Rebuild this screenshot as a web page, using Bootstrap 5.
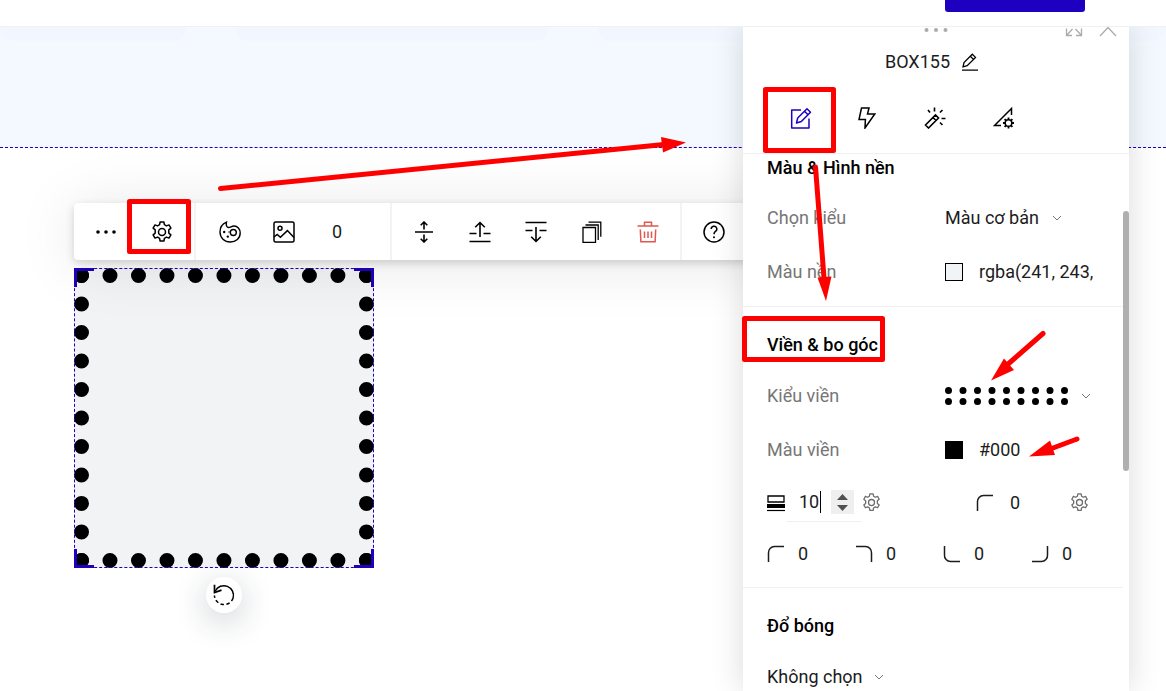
<!DOCTYPE html>
<html lang="vi">
<head>
<meta charset="utf-8">
<meta name="viewport" content="width=device-width, initial-scale=1">
<title>BOX155</title>
<link href="https://cdn.jsdelivr.net/npm/bootstrap@5.3.0/dist/css/bootstrap.min.css" rel="stylesheet">
<style>
:root{--brand:#1e00c0;--line:#f0f0f1}
body{font-family:Roboto,"Noto Sans",sans-serif;font-size:18px;line-height:28px;color:#1c1c1c;background:#fff;fill:none;stroke:currentColor;stroke-width:1.5}
svg{display:block}
button,input,select{font:inherit;color:inherit}
.topbar{height:27px;padding-right:81px;border-bottom:1px solid var(--line)}
.btn-publish{width:140px;height:12px;background:var(--brand);border-radius:0 0 3px 3px}
.hero{height:121px;background:#f4f8ff;border-bottom:1px dashed var(--brand)}
.hero-tile{height:14px;background:#f2f6fe;border-radius:0 0 60px 60px}
.icon-btn{border:0;background:none;padding:0;color:#000;display:flex;align-items:center;justify-content:center}
.toolbar-float{left:74px;top:176px;width:720px;height:57px;background:#fff;border-radius:4px;box-shadow:0 3px 8px rgba(0,0,0,.16),0 4px 60px rgba(0,0,0,.1)}
.tool-group{padding:0 4px;border-right:2px solid #f3f3f3}
.tool-group:last-child{border:0}
.tool-group .icon-btn{width:56px;height:100%}
.tool-group input{width:74px;padding:0 0 0 20px}
.bare{border:0;background:none;outline:0;padding:0;appearance:textfield;-moz-appearance:textfield}
.bare::-webkit-inner-spin-button{appearance:none;margin:0}
.shape{left:74px;top:241px;width:300px;height:300px;background:#f1f3f4;border:15px dotted #000}
.frame{inset:-15px;border:1px dashed var(--brand)}
.grip{width:20px;height:19px;border:0 solid var(--brand)}
.grip-tl{left:-1px;top:-1px;border-width:3px 0 0 3px}
.grip-tr{right:-1px;top:-1px;border-width:3px 3px 0 0}
.grip-bl{left:-1px;bottom:-1px;border-width:0 0 3px 3px}
.grip-br{right:-1px;bottom:-1px;border-width:0 3px 3px 0}
.btn-rotate{left:206px;top:550px;width:36px;height:36px;background:#fff;border-radius:50%;box-shadow:0 8px 32px rgba(30,40,60,.24)}
.notes{left:0;top:0;overflow:visible;pointer-events:none;stroke:#f00;stroke-width:5;stroke-linecap:round;stroke-linejoin:round}
.notes .head{fill:#f00;stroke:none}
.inspector{right:37px;width:386px;background:#fff;box-shadow:0 0 30px rgba(0,0,0,.15)}
.grab{height:14px;color:#ababab}
.grab-tools{right:12px;top:0}
.title-row{height:42px;padding-right:8px;gap:11px}
.tabs-row{height:71px;padding-left:24px;border-bottom:1px solid var(--line)}
.tabs-row .icon-btn{width:67px}
.tabs-row .active{color:var(--brand)}
.props{margin-right:6px}
.block{padding:24px 30px 8px 24px;border-bottom:1px solid var(--line)}
.block:first-child{padding-top:0;padding-bottom:7px}
.block h2{font-size:18px;line-height:28px;font-weight:500;margin:0 0 10px;color:#000}
.block:first-child h2{margin-bottom:9px}
.prop{display:grid;grid-template-columns:178px 1fr;align-items:center;height:54px}
.prop>label,.prop>span{color:#767676}
.form-select.plain{border:0;padding:0 24px 0 0;width:120px;line-height:28px;border-radius:0;background:url("data:image/svg+xml,%3csvg xmlns='http://www.w3.org/2000/svg' viewBox='0 0 10 10'%3e%3cpath d='M1 3l4 4 4-4' fill='none' stroke='%23777'/%3e%3c/svg%3e") no-repeat right 3px center/10px;color:inherit;font-size:18px}
.swatch{width:18px;height:18px;border:1px solid #000;margin-right:16px}
.nums{height:51px;display:flex;align-items:center}
.num{width:88px;gap:13px}
.num input{width:40px}
.gear-btn{color:#6d6d6d}
.width-field{padding-left:12px;height:38px;border-bottom:1px solid var(--line);width:75px;margin-left:2px}
.width-field input{width:21px}
.caret{width:1px;height:22px;background:#000}
.spin{width:23px;height:24px;background:#efefef;margin-left:10px;color:#505050}
.thumb{right:0;top:184px;width:6px;height:260px;background:#afafaf;border-radius:3px}
</style>
</head>
<body class="vh-100 d-flex flex-column overflow-hidden">
<svg width="0" height="0" class="position-absolute" aria-hidden="true">
  <symbol id="gear" viewBox="0 0 22 22"><path d="M8.600 3.700l.5-2.700h3.800l.5 2.700 2 1.200 2.600-1 1.900 3.300-2.100 1.700v3.200l2.100 1.700-1.900 3.300-2.600-1-2 1.200-.5 2.700H9.100l-.5-2.700-2-1.200-2.600 1-1.900-3.300 2.100-1.700v-3.200L2.100 7.200 4 3.900l2.600 1z" stroke-linejoin="round"/><circle cx="11" cy="11" r="3.500"/></symbol>
  <symbol id="corner" viewBox="0 0 18 18"><path d="M1.500 17V8a6 6 0 0 1 6-6.500H17"/></symbol>
</svg>

<header class="topbar d-flex justify-content-end align-items-start flex-shrink-0">
  <button class="btn-publish border-0 p-0" type="button" aria-label="Xuất bản"></button>
</header>

<main class="flex-fill position-relative overflow-hidden">
  <section class="hero">
    <div class="d-flex gap-5">
      <div class="hero-tile" style="width:16%"></div><div class="hero-tile" style="width:27%"></div><div class="hero-tile flex-fill"></div>
    </div>
  </section>

  <div class="shape position-absolute">
    <div class="frame position-absolute">
      <i class="grip grip-tl position-absolute"></i><i class="grip grip-tr position-absolute"></i>
      <i class="grip grip-bl position-absolute"></i><i class="grip grip-br position-absolute"></i>
    </div>
  </div>
  <button class="icon-btn btn-rotate position-absolute" type="button" aria-label="Xoay">
    <svg width="22" height="22" viewBox="0 0 22 22"><path d="M2.300 7A9.600 9.600 0 0 1 20.100 14"/><path d="M20.100 14A9.600 9.600 0 0 1 1.400 11.500" stroke-dasharray="3.500 2.500"/><path d="M1.500 .8v7.700l7-2.400" stroke-width="1.700"/></svg>
  </button>

  <div class="toolbar-float position-absolute d-flex" role="toolbar" aria-label="Công cụ">
    <div class="tool-group d-flex">
      <button class="icon-btn" type="button" aria-label="Thêm"><svg width="22" height="6" viewBox="0 0 22 6"><g fill="currentColor" stroke="none"><circle cx="3" cy="3" r="1.800"/><circle cx="11" cy="3" r="1.800"/><circle cx="19" cy="3" r="1.800"/></g></svg></button>
      <button class="icon-btn" type="button" aria-label="Thiết lập"><svg width="22" height="22"><use href="#gear"/></svg></button>
    </div>
    <div class="tool-group d-flex">
      <button class="icon-btn ps-1" type="button" aria-label="Màu"><svg width="22" height="22" viewBox="0 0 22 22" stroke-width="1.400"><path d="M7.500 1.100C3.500 2.700 1 6.700 1 11c0 5.700 4.500 10 10.200 10C17 21 21.200 17.300 21.200 12c0-4-2.700-7-6.200-7-2.500 0-3.600 1.700-5.400 1.500C7.200 6.300 7 3.500 7.500 1.100z"/><circle cx="14.300" cy="11.500" r="3"/><g fill="currentColor" stroke="none"><circle cx="5.200" cy="11" r="1.200"/><circle cx="8.800" cy="15.600" r="1.200"/><circle cx="10" cy="11" r=".7"/></g></svg></button>
      <button class="icon-btn" type="button" aria-label="Ảnh"><svg width="22" height="22" viewBox="0 0 22 22"><rect x="1" y="1" width="20" height="20" rx="1.500"/><circle cx="7" cy="7.300" r="2"/><path d="M1 16l3.200-2.600 3.200 2.800 7-6.600L21 16.500"/></svg></button>
      <input class="bare" type="number" value="0" aria-label="Viền">
    </div>
    <div class="tool-group d-flex">
      <button class="icon-btn" type="button" aria-label="Căn giữa"><svg width="22" height="22" viewBox="0 0 22 22" stroke-width="1.600"><path d="M2 11h18M11 8.500V1M7.700 4.200L11 1l3.300 3.200M11 13.500V21M7.700 17.800L11 21l3.300-3.200"/></svg></button>
      <button class="icon-btn" type="button" aria-label="Lên trên"><svg width="22" height="22" viewBox="0 0 22 22" stroke-width="1.600"><path d="M.5 20.500h21M.5 12.500h7M14.500 12.500h7M11 16V1.500M6.200 6.200L11 1.500l4.800 4.700"/></svg></button>
      <button class="icon-btn" type="button" aria-label="Xuống dưới"><svg width="22" height="22" viewBox="0 0 22 22" stroke-width="1.600"><path d="M.5 1.500h21M.5 9.500h7M14.500 9.500h7M11 6v14.500M6.200 15.800l4.800 4.700 4.800-4.700"/></svg></button>
      <button class="icon-btn" type="button" aria-label="Nhân bản"><svg width="22" height="22" viewBox="0 0 22 22" stroke-width="1.300"><path d="M2 6.500h12.500v14.800H2zM4.500 4h12.700v15M7.500 1.200h12.300v14.500"/></svg></button>
      <button class="icon-btn" type="button" aria-label="Xóa" style="color:#e0574f"><svg width="22" height="22" viewBox="0 0 22 22"><path d="M.5 5h21M7.500 5V1.200h7V5M3.300 8.500l.6 12.200h14.200l.6-12.200M7.500 10.500v6.500M11 10.500v6.500M14.500 10.500v6.500"/></svg></button>
    </div>
    <div class="tool-group d-flex">
      <button class="icon-btn" type="button" aria-label="Trợ giúp"><svg width="22" height="22" viewBox="0 0 22 22"><circle cx="11" cy="11" r="10"/><path d="M8.200 8a2.800 2.800 0 1 1 4.200 2.400c-1 .7-1.400 1.200-1.400 2.800"/><circle cx="11" cy="16.200" r="1" fill="currentColor" stroke="none"/></svg></button>
    </div>
  </div>

  <svg class="notes position-absolute" width="743" height="664" viewBox="0 27 743 664" aria-hidden="true">
    <rect x="129.500" y="201.500" width="59" height="50"/>
    <path d="M220.500 188.500L664 144.500"/><path class="head" d="M686 142.500l-25-5.500 2 15.500z"/>
  </svg>

  <aside class="inspector position-absolute top-0 bottom-0 d-flex flex-column">
    <div class="grab position-relative flex-shrink-0">
      <svg class="mx-auto" width="24" height="6" viewBox="0 0 24 6"><g fill="currentColor" stroke="none"><circle cx="2.500" cy="3" r="2"/><circle cx="12" cy="3" r="2"/><circle cx="21.500" cy="3" r="2"/></g></svg>
      <div class="grab-tools position-absolute d-flex gap-3">
        <button class="icon-btn text-reset" type="button" aria-label="Mở rộng"><svg width="18" height="10" viewBox="0 0 18 10"><path d="M1.500 1.500V8.500H7M1.500 8.500L7.500 2M16.500 1.500V8.500H11M16.500 8.500L10.500 2" stroke-width="1.300"/></svg></button>
        <button class="icon-btn text-reset" type="button" aria-label="Đóng"><svg width="18" height="10" viewBox="0 0 18 10"><path d="M1 9l8-8.500L17 9" stroke-width="1.300"/></svg></button>
      </div>
    </div>
    <div class="title-row d-flex justify-content-center align-items-center flex-shrink-0">
      <span>BOX155</span>
      <button class="icon-btn" type="button" aria-label="Đổi tên"><svg width="18" height="18" viewBox="0 0 18 18" stroke-width="1.300"><path d="M1 17.200h16M2 13.800l1-4.300L11.300 1.200l3.200 3.200L6.200 12.700zM9.300 3.200l3.200 3.200"/></svg></button>
    </div>
    <nav class="tabs-row d-flex flex-shrink-0" aria-label="Thẻ">
      <button class="icon-btn active" type="button" aria-label="Thiết kế"><svg width="22" height="22" viewBox="0 0 22 22"><path d="M11 3H1.700v18H19v-9.500M6.500 16l1.200-5L17 1.700l3.500 3.500-9.200 9.300zM14.500 4.200l3.500 3.500" stroke-linejoin="round"/></svg></button>
      <button class="icon-btn" type="button" aria-label="Sự kiện"><svg width="22" height="22" viewBox="0 0 22 22"><path d="M4.500 1h7.500l-1.500 6h7.300L8 21l.4-8.500H2z"/></svg></button>
      <button class="icon-btn" type="button" aria-label="Hiệu ứng"><svg width="22" height="22" viewBox="0 0 22 22" stroke-width="1.600"><path d="M1.500 18L11.500 8l3 3L4.500 21zM9 10.500l3 3M10.500 .5v4M4 3l2 2.500M18.500 3l-2.500 2.500M17.500 11.500h4M16 15.500l2.500 2.500"/></svg></button>
      <button class="icon-btn ps-1" type="button" aria-label="Nâng cao"><svg width="22" height="22" viewBox="0 0 22 22"><path d="M8 18.500H1.500L18.500 1.500V8"/><circle cx="15.500" cy="16" r="3.300"/><path d="M15.500 10.500v2M15.500 19.500v2M10 16h2M19 16h2M11.600 12.100l1.500 1.500M17.900 18.400l1.500 1.500M19.400 12.100l-1.500 1.500M13.100 18.400l-1.500 1.500" stroke-width="1.800"/></svg></button>
    </nav>

    <div class="props flex-fill overflow-hidden">
      <section class="block">
        <h2>Màu &amp; Hình nền</h2>
        <div class="prop"><label for="kind">Chọn kiểu</label>
          <select id="kind" class="form-select plain"><option>Màu cơ bản</option></select></div>
        <div class="prop"><label for="bg">Màu nền</label>
          <div class="d-flex align-items-center"><span class="swatch flex-shrink-0" style="background:#f1f3f4"></span><input id="bg" class="bare w-100" value="rgba(241, 243, 244, 1)"></div></div>
      </section>
      <section class="block">
        <h2>Viền &amp; bo góc</h2>
        <div class="prop"><span id="styleLabel">Kiểu viền</span>
          <button class="icon-btn justify-content-start" type="button" aria-labelledby="styleLabel">
            <svg width="124" height="18" viewBox="0 0 124 18"><g stroke="#000" stroke-width="7" stroke-linecap="round" stroke-dasharray="0 14.500"><path d="M3.500 3.500H121"/><path d="M3.500 14.500H121"/></g></svg>
            <svg class="ms-2 ps-1" width="14" height="10" viewBox="0 0 10 10" stroke="#777" stroke-width="1"><path d="M1 3l4 4 4-4"/></svg>
          </button></div>
        <div class="prop"><label for="bc">Màu viền</label>
          <div class="d-flex align-items-center"><span class="swatch flex-shrink-0 bg-black"></span><input id="bc" class="bare w-100" value="#000"></div></div>
        <div class="nums">
          <svg width="18" height="18" viewBox="0 0 18 18" stroke="#000"><path d="M1 2h16v6H1z" stroke-width="1.300"/><path d="M0 12h18" stroke-width="4"/><path d="M0 16.500h18" stroke-width="1.200"/></svg>
          <div class="width-field d-flex align-items-center">
            <input class="bare" type="number" value="10" aria-label="Độ dày viền"><span class="caret"></span>
            <span class="spin flex-shrink-0"><svg width="23" height="24" viewBox="0 0 23 24" fill="currentColor" stroke="none"><path d="M6 10l5.500-6 5.500 6zM6 15l5.500 6 5.500-6z"/></svg></span>
          </div>
          <button class="icon-btn gear-btn" type="button" aria-label="Tùy chọn viền"><svg width="19" height="19"><use href="#gear"/></svg></button>
          <div class="ms-auto d-flex align-items-center">
            <svg class="me-3" width="18" height="18"><use href="#corner"/></svg>
            <input class="bare" style="width:60px" type="number" value="0" aria-label="Bo góc">
            <button class="icon-btn gear-btn me-1" type="button" aria-label="Tùy chọn bo góc"><svg width="19" height="19"><use href="#gear"/></svg></button>
          </div>
        </div>
        <div class="nums">
          <div class="num d-flex align-items-center flex-shrink-0"><svg width="18" height="18"><use href="#corner"/></svg><input class="bare" type="number" value="0" aria-label="Góc trên trái"></div>
          <div class="num d-flex align-items-center flex-shrink-0"><svg width="18" height="18" viewBox="0 0 18 18"><path d="M1 1.500h9.500a6 6 0 0 1 6 6.500v9"/></svg><input class="bare" type="number" value="0" aria-label="Góc trên phải"></div>
          <div class="num d-flex align-items-center flex-shrink-0"><svg width="18" height="18" viewBox="0 0 18 18"><path d="M1.500 1v9a6 6 0 0 0 6 6.500H17"/></svg><input class="bare" type="number" value="0" aria-label="Góc dưới trái"></div>
          <div class="num d-flex align-items-center flex-shrink-0"><svg width="18" height="18" viewBox="0 0 18 18"><path d="M1 16.500h9.500a6 6 0 0 0 6-6.500V1"/></svg><input class="bare" type="number" value="0" aria-label="Góc dưới phải"></div>
        </div>
      </section>
      <section class="block">
        <h2>Đổ bóng</h2>
        <div class="prop"><select class="form-select plain" aria-label="Đổ bóng"><option>Không chọn</option></select></div>
      </section>
    </div>
    <div class="thumb position-absolute"></div>

    <svg class="notes position-absolute" width="386" height="664" viewBox="743 27 386 664" aria-hidden="true">
      <rect x="765.500" y="89.500" width="68" height="61"/>
      <rect x="744.500" y="318.500" width="138" height="41"/>
      <path d="M815.500 167L824 278"/><path class="head" d="M817.500 277.500l14-1-5.500 24.500z"/>
      <path d="M1043 333.500L1007 365"/><path class="head" d="M991 380.500l13-22 10 11.500z"/>
      <path d="M1077 439L1053 448"/><path class="head" d="M1029 456.500l21-16 5 14.500z"/>
    </svg>
  </aside>
</main>
<script src="https://cdn.jsdelivr.net/npm/bootstrap@5.3.0/dist/js/bootstrap.bundle.min.js"></script>
</body>
</html>
